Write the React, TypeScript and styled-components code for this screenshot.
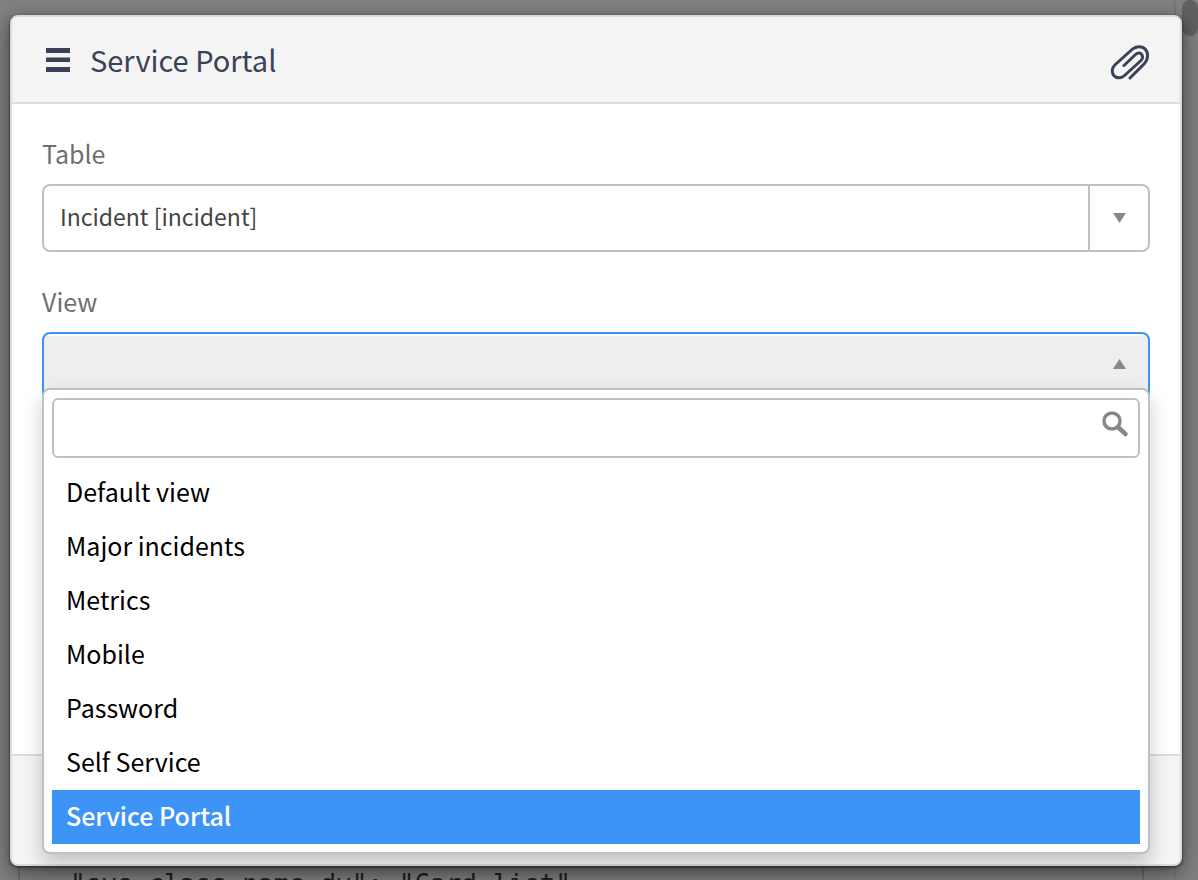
import React from 'react';
import styled, { createGlobalStyle } from 'styled-components';

const GlobalStyle = createGlobalStyle`
  *, *::before, *::after { box-sizing: border-box; }
  html, body { margin: 0; height: 100%; overflow: hidden; background: #808080; }
  body, button, input { font-family: "Noto Sans CJK SC", "Noto Sans", sans-serif; }
  #root { height: 100%; }
`;

const Page = styled.div`
  position: relative;
  height: 100%;
  overflow: hidden;
  padding: 15px 16px 0 10px;
`;

const Backdrop = styled.div`
  position: absolute;
  inset: 118px 54px 0 18px;
  border: solid #6c6c6c;
  border-width: 2px 2px 0;
  display: flex;
  align-items: flex-end;
`;

const Code = styled.pre`
  margin: 0 0 -22px 50px;
  font: 26px/36px "DejaVu Sans Mono", monospace;
  color: #1d1f2b;
`;

const Gutter = styled.div`
  position: absolute;
  inset: 0 0 0 auto;
  width: 24px;
  border-left: 2px solid #787878;
`;

const ScrollThumb = styled.div`
  width: 16px;
  height: 36px;
  margin-left: 6px;
  border-radius: 8px;
  background: #606060;
`;

const Dialog = styled.section`
  position: relative;
  display: flex;
  flex-direction: column;
  min-height: 851px;
  border: 2px solid #dadada;
  border-radius: 8px;
  background: #fff;
  box-shadow: 0 1px 3px rgba(0, 0, 0, 0.6), 0 6px 20px rgba(0, 0, 0, 0.5);
`;

const Header = styled.header`
  display: flex;
  align-items: center;
  gap: 20px;
  height: 87px;
  padding: 0 30px 0 34px;
  border-bottom: 2px solid #dcdcdc;
  border-radius: 6px 6px 0 0;
  background: #f4f4f4;
  color: #3b4157;
`;

const Title = styled.h1`
  flex: 1;
  margin: 0;
  padding-bottom: 2px;
  font-size: 29px;
  font-weight: 400;
  line-height: 40px;
`;

const IconButton = styled.button`
  display: flex;
  padding: 0;
  border: 0;
  background: none;
  color: inherit;
`;

const Body = styled.div`
  flex: 1;
  padding: 32px 30px;
`;

const Field = styled.div`
  margin-bottom: 32px;
`;

const Label = styled.label`
  display: block;
  margin-bottom: 14px;
  font-size: 25px;
  line-height: 34px;
  color: #6f6f6f;
`;

const Combo = styled.button`
  display: flex;
  align-items: stretch;
  width: 100%;
  height: 68px;
  padding: 0;
  border: 2px solid #bdc0c4;
  border-radius: 8px;
  background: #fff;
  color: #444;
  font-size: 23px;
  text-align: left;
`;

const ComboValue = styled.span`
  flex: 1;
  padding-left: 16px;
  line-height: 60px;
`;

const ComboArrow = styled.span`
  display: flex;
  align-items: center;
  justify-content: center;
  width: 60px;
  border-left: 2px solid #bdc0c4;
`;

const OpenCombo = styled(Combo)`
  border-color: #3d94f6;
  background: linear-gradient(#fff 2px, #eee 2px);

  ${ComboArrow} {
    border-color: transparent;
    height: 60px;
  }
`;

const Anchor = styled.div`
  position: relative;
`;

const Dropdown = styled.div`
  position: absolute;
  z-index: 1;
  top: 56px;
  left: 0;
  right: 0;
  padding: 8px;
  border: 2px solid #bdc0c4;
  border-radius: 8px;
  background: #fff;
  box-shadow: 0 10px 20px rgba(0, 0, 0, 0.2);
`;

const Search = styled.div`
  display: flex;
  align-items: center;
  height: 60px;
  margin-bottom: 8px;
  padding: 0 9px 6px 0;
  border: 2px solid #bdc0c4;
  border-radius: 6px;
`;

const SearchInput = styled.input`
  flex: 1;
  height: 100%;
  min-width: 0;
  padding: 0 12px;
  border: 0;
  outline: 0;
  background: none;
  font-size: 25px;
`;

const Options = styled.ul`
  margin: 0;
  padding: 0;
  list-style: none;
`;

const Option = styled.li<{ $selected: boolean }>`
  padding: 0 14px 4px;
  font-size: 25px;
  font-weight: ${(p) => (p.$selected ? 500 : 400)};
  line-height: 50px;
  color: ${(p) => (p.$selected ? '#fff' : '#000')};
  background: ${(p) => (p.$selected ? '#3d94f6' : 'transparent')};
`;

const Footer = styled.footer`
  height: 110px;
  border-top: 2px solid #dcdcdc;
  border-radius: 0 0 6px 6px;
  background: #f4f4f4;
`;

const views = ['Default view', 'Major incidents', 'Metrics', 'Mobile', 'Password', 'Self Service', 'Service Portal'];

const MenuIcon = () => (
  <svg width="24" height="24" viewBox="0 0 24 24" fill="currentColor" aria-hidden="true">
    <path d="M0 0h24v5H0zM0 9.500h24v4.600H0zM0 19h24v5H0z" />
  </svg>
);

const ClipIcon = () => (
  <svg width="40" height="40" viewBox="0 -4 40 40" fill="none" stroke="currentColor" strokeWidth="3" strokeLinecap="round" aria-hidden="true">
    <path d="M14 21.500L25.500 10.500C28 8.200 30.800 8.800 32 11C33 13 32.500 15 31 16.500L14.500 31.500C11 34.800 6.200 34.500 3.800 31.500C1.500 28.500 1.800 24 4.800 21L22 5.500C26 2 32 1.500 35.500 5.500C38.800 9.500 38 15.500 34.500 19.500L20 34" />
  </svg>
);

const SearchIcon = () => (
  <svg width="28" height="28" viewBox="0 0 28 28" fill="none" stroke="#888" aria-hidden="true">
    <circle cx="11" cy="10" r="8" strokeWidth="3.500" />
    <path d="M17 16L24.500 23" strokeWidth="4.500" strokeLinecap="round" />
  </svg>
);

const Arrow = ({ up = false }: { up?: boolean }) => (
  <svg width="13" height="10" viewBox="0 0 13 10" fill="#888" aria-hidden="true">
    <path d={up ? 'M6.500 0L13 10H0z' : 'M0 0h13L6.500 10z'} />
  </svg>
);

export default function App() {
  return (
    <>
      <GlobalStyle />
      <Page>
        <Backdrop>
          <Code>{'"sys_class_name_dv": "Card list"'}</Code>
        </Backdrop>
        <Gutter>
          <ScrollThumb />
        </Gutter>
        <Dialog role="dialog" aria-labelledby="dialog-title">
          <Header>
            <IconButton type="button" aria-label="Menu"><MenuIcon /></IconButton>
            <Title id="dialog-title">Service Portal</Title>
            <IconButton type="button" aria-label="Attachments"><ClipIcon /></IconButton>
          </Header>
          <Body>
            <Field>
              <Label htmlFor="table">Table</Label>
              <Combo id="table" type="button">
                <ComboValue>Incident [incident]</ComboValue>
                <ComboArrow><Arrow /></ComboArrow>
              </Combo>
            </Field>
            <Field>
              <Label htmlFor="view">View</Label>
              <Anchor>
                <OpenCombo id="view" type="button" aria-expanded="true">
                  <ComboValue />
                  <ComboArrow><Arrow up /></ComboArrow>
                </OpenCombo>
                <Dropdown>
                  <Search>
                    <SearchInput type="text" aria-label="Search views" />
                    <SearchIcon />
                  </Search>
                  <Options role="listbox" aria-label="View">
                    {views.map((view) => (
                      <Option key={view} role="option" $selected={view === 'Service Portal'} aria-selected={view === 'Service Portal'}>
                        {view}
                      </Option>
                    ))}
                  </Options>
                </Dropdown>
              </Anchor>
            </Field>
          </Body>
          <Footer />
        </Dialog>
      </Page>
    </>
  );
}
